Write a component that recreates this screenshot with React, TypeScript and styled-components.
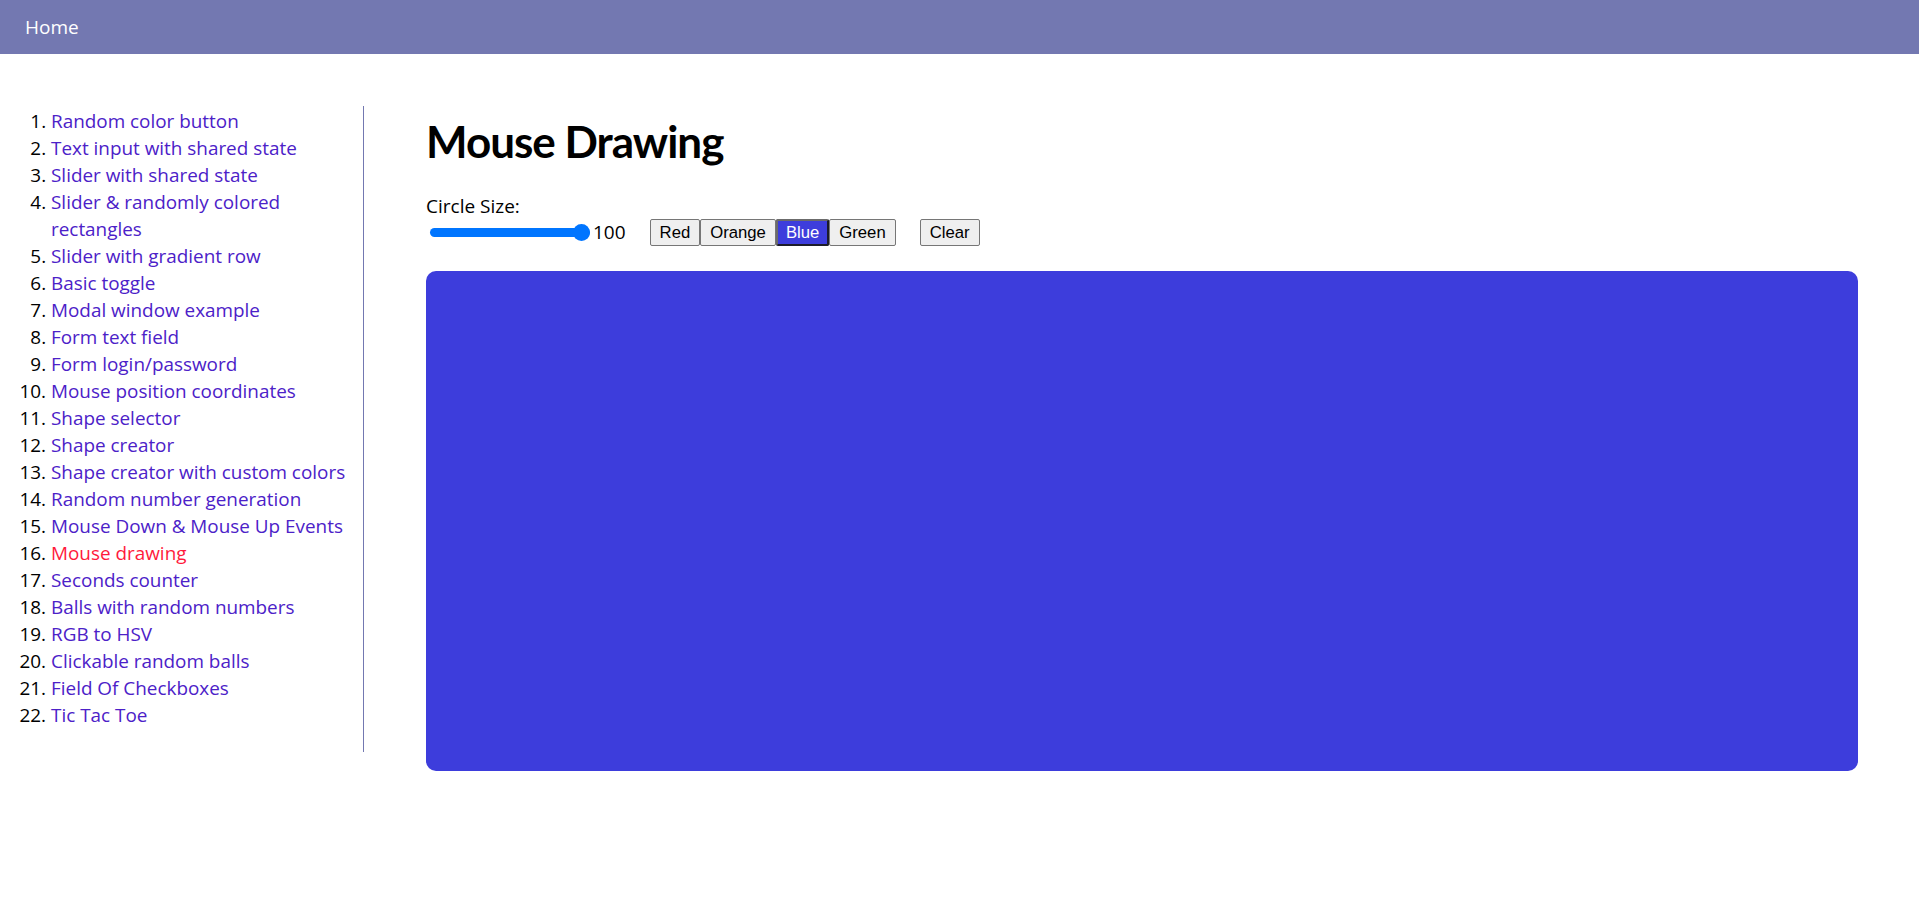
import React from "react";
import styled, { createGlobalStyle, css } from "styled-components";

const Global = createGlobalStyle`
  html, body { margin: 0; padding: 0; background: #ffffff; }
  body { font-family: "Open Sans", "Noto Sans", sans-serif; color: #000; }
  * { box-sizing: border-box; }
`;

const Header = styled.header`
  height: 54px;
  background: #7378b1;
  display: flex;
  align-items: center;
  padding-left: 25px;
`;

const HomeLink = styled.a`
  color: #ffffff;
  font-size: 19px;
  text-decoration: none;
`;

const Layout = styled.div`
  display: flex;
  align-items: flex-start;
  padding-top: 52px;
`;

const Sidebar = styled.nav`
  width: 364px;
  flex: none;
  height: 646px;
  border-right: 1px solid #7378b1;
`;

const List = styled.ol`
  margin: 0;
  padding: 2px 8px 0 51px;
  font-size: 18.9px;
  line-height: 27px;
`;

const Item = styled.li`
  padding-left: 0;
`;

const NavLink = styled.a<{ $active?: boolean }>`
  color: ${(p) => (p.$active ? "#ff1a3c" : "#4c21c8")};
  text-decoration: none;
`;

const Main = styled.main`
  flex: 1;
  padding: 0 61px 0 62px;
`;

const Title = styled.h1`
  margin: 8px 0 0 0;
  font-family: "Lato", "Open Sans", sans-serif;
  font-size: 44px;
  font-weight: 700;
  line-height: 54px;
  letter-spacing: -1px;
`;

const Controls = styled.div`
  display: flex;
  align-items: flex-end;
  margin-top: 26px;
`;

const SizeGroup = styled.div`
  display: flex;
  flex-direction: column;
  font-size: 19px;
`;

const SizeLabel = styled.label`
  line-height: 24px;
`;

const SliderRow = styled.div`
  display: flex;
  align-items: center;
  height: 28px;
`;

const Range = styled.input`
  -webkit-appearance: none;
  appearance: none;
  width: 160px;
  height: 18px;
  margin: 0 3px 0 4px;
  background: transparent;
  &::-webkit-slider-runnable-track {
    height: 9px;
    border-radius: 5px;
    background: #0075ff;
  }
  &::-webkit-slider-thumb {
    -webkit-appearance: none;
    width: 17px;
    height: 17px;
    border-radius: 50%;
    background: #0075ff;
    margin-top: -4px;
  }
`;

const SizeValue = styled.span`
  font-size: 19px;
`;

const ColorGroup = styled.div`
  display: flex;
  margin-left: 24px;
`;

const Btn = styled.button<{ $selected?: boolean }>`
  font-family: "Liberation Sans", Arial, sans-serif;
  font-size: 16.7px;
  line-height: 19px;
  height: 27px;
  padding: 0 9px;
  border-radius: 2px;
  cursor: pointer;
  background: #efefef;
  color: #000000;
  border: 1px solid #767676;
  ${(p) =>
    p.$selected &&
    css`
      background: #3d3ddc;
      color: #ffffff;
      padding: 0 8px;
      border-width: 2px;
      border-color: #6b6b6b #1c1c2a #1c1c2a #6b6b6b;
    `}
`;

const ClearBtn = styled(Btn)`
  margin-left: 24px;
`;

const Canvas = styled.div`
  margin-top: 25px;
  height: 500px;
  border-radius: 10px;
  background: #3d3ddc;
`;

const items = [
  "Random color button",
  "Text input with shared state",
  "Slider with shared state",
  "Slider & randomly colored rectangles",
  "Slider with gradient row",
  "Basic toggle",
  "Modal window example",
  "Form text field",
  "Form login/password",
  "Mouse position coordinates",
  "Shape selector",
  "Shape creator",
  "Shape creator with custom colors",
  "Random number generation",
  "Mouse Down & Mouse Up Events",
  "Mouse drawing",
  "Seconds counter",
  "Balls with random numbers",
  "RGB to HSV",
  "Clickable random balls",
  "Field Of Checkboxes",
  "Tic Tac Toe",
];

export default function App() {
  const colors = ["Red", "Orange", "Blue", "Green"];
  return (
    <>
      <Global />
      <Header>
        <HomeLink href="#">Home</HomeLink>
      </Header>
      <Layout>
        <Sidebar>
          <List>
            {items.map((t) => (
              <Item key={t}>
                <NavLink href="#" $active={t === "Mouse drawing"}>
                  {t}
                </NavLink>
              </Item>
            ))}
          </List>
        </Sidebar>
        <Main>
          <Title>Mouse Drawing</Title>
          <Controls>
            <SizeGroup>
              <SizeLabel>Circle Size:</SizeLabel>
              <SliderRow>
                <Range type="range" min={10} max={100} defaultValue={100} />
                <SizeValue>100</SizeValue>
              </SliderRow>
            </SizeGroup>
            <ColorGroup>
              {colors.map((c) => (
                <Btn key={c} $selected={c === "Blue"}>
                  {c}
                </Btn>
              ))}
            </ColorGroup>
            <ClearBtn>Clear</ClearBtn>
          </Controls>
          <Canvas />
        </Main>
      </Layout>
    </>
  );
}
